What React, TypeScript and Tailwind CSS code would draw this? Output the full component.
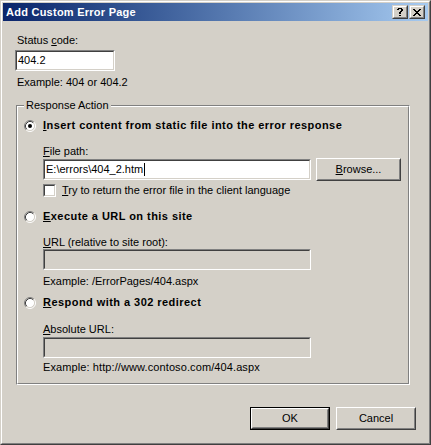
import clsx from 'clsx';
import type { ReactNode } from 'react';

function Sunken({ className, disabled, children }: { className?: string; disabled?: boolean; children?: ReactNode }) {
  return (
    <div className={clsx('border border-t-[#808080] border-l-[#808080] border-r-white border-b-white', className)}>
      <div
        className={clsx(
          'flex h-full items-center border border-t-[#404040] border-l-[#404040] border-r-[#d4d0c8] border-b-[#d4d0c8] px-px',
          disabled ? 'bg-[#d4d0c8]' : 'bg-white',
        )}
      >
        {children}
      </div>
    </div>
  );
}

function Button({ className, isDefault, children }: { className?: string; isDefault?: boolean; children: ReactNode }) {
  return (
    <div className={clsx(isDefault && 'border border-black', className)}>
      <div className="h-full border border-t-white border-l-white border-r-[#404040] border-b-[#404040]">
        <div className="flex h-full items-center justify-center border border-t-[#d4d0c8] border-l-[#d4d0c8] border-r-[#808080] border-b-[#808080]">
          {children}
        </div>
      </div>
    </div>
  );
}

function TitleButton({ children }: { children: ReactNode }) {
  return (
    <div className="h-[14px] w-[16px] border border-t-[#d4d0c8] border-l-[#d4d0c8] border-r-[#404040] border-b-[#404040] bg-[#d4d0c8]">
      <div className="flex h-full items-center justify-center border border-t-white border-l-white border-r-[#808080] border-b-[#808080]">
        {children}
      </div>
    </div>
  );
}

function Radio({ checked }: { checked?: boolean }) {
  return (
    <svg width="12" height="12" viewBox="0 0 12 12" className="shrink-0">
      <circle cx="6" cy="6" r="4.5" fill="#fff" />
      <path d="M2.11 9.89A5.5 5.5 0 0 1 9.89 2.11" stroke="#808080" fill="none" />
      <path d="M9.89 2.11A5.5 5.5 0 0 1 2.11 9.89" stroke="#fff" fill="none" />
      <path d="M2.82 9.18A4.5 4.5 0 0 1 9.18 2.82" stroke="#404040" fill="none" />
      <path d="M9.18 2.82A4.5 4.5 0 0 1 2.82 9.18" stroke="#d4d0c8" fill="none" />
      {checked && <circle cx="6" cy="6" r="2" fill="#000" />}
    </svg>
  );
}

// pixel glyphs for the caption buttons
const closePx = [
  [0, 0], [1, 0], [6, 0], [7, 0],
  [1, 1], [2, 1], [5, 1], [6, 1],
  [2, 2], [3, 2], [4, 2], [5, 2],
  [3, 3], [4, 3],
  [2, 4], [3, 4], [4, 4], [5, 4],
  [1, 5], [2, 5], [5, 5], [6, 5],
  [0, 6], [1, 6], [6, 6], [7, 6],
];
const helpPx = [
  [1, 0], [2, 0], [3, 0], [4, 0],
  [0, 1], [1, 1], [4, 1], [5, 1],
  [4, 2], [5, 2],
  [3, 3], [4, 3],
  [2, 4], [3, 4],
  [2, 5], [3, 5],
  [2, 7], [3, 7],
];

function PixelGlyph({ px, w, h }: { px: number[][]; w: number; h: number }) {
  return (
    <svg width={w} height={h} viewBox={`0 0 ${w} ${h}`} shapeRendering="crispEdges">
      {px.map(([x, y]) => (
        <rect key={`${x}-${y}`} x={x} y={y} width="1" height="1" fill="#000" />
      ))}
    </svg>
  );
}

export default function App() {
  return (
    <div className="h-[445px] w-[431px] border border-t-[#d4d0c8] border-l-[#d4d0c8] border-r-[#404040] border-b-[#404040] bg-[#d4d0c8] font-['Liberation_Sans',Arial,sans-serif] text-[11px] leading-[13px] text-black">
      <div className="flex h-full flex-col border border-t-white border-l-white border-r-[#808080] border-b-[#808080] p-px">
        {/* title bar */}
        <div className="flex h-[18px] items-center justify-between bg-gradient-to-r from-[#0a246a] to-[#a6caf0] pl-[3px] pr-[3px]">
          <span className="font-bold tracking-[0.25px] text-white">Add Custom Error Page</span>
          <div className="flex gap-px">
            <TitleButton>
              <PixelGlyph px={helpPx} w={6} h={8} />
            </TitleButton>
            <TitleButton>
              <PixelGlyph px={closePx} w={8} h={7} />
            </TitleButton>
          </div>
        </div>

        <div className="flex flex-col px-[12px]">
          <div className="mt-[13px] ml-[2px]">
            Status <u>c</u>ode:
          </div>
          <Sunken className="mt-[3px] h-[21px] w-[100px]">404.2</Sunken>
          <div className="mt-[5px] ml-[2px]">Example: 404 or 404.2</div>

          {/* group box */}
          <div className="relative mt-[16px] ml-px h-[280px] w-[394px] border border-t-[#808080] border-l-[#808080] border-r-white border-b-white">
            <span className="absolute top-[-7px] left-[7px] bg-[#d4d0c8] px-[2px]">Response Action</span>
            <div className="h-full border border-t-white border-l-white border-r-[#808080] border-b-[#808080] pt-[12px] pl-[6px]">
              <div className="flex h-[13px] items-center gap-[7px]">
                <Radio checked />
                <span className="font-bold tracking-[0.45px]">
                  <u>I</u>nsert content from static file into the error response
                </span>
              </div>
              <div className="flex flex-col pl-[19px]">
                <div className="mt-[13px]">
                  <u>F</u>ile path:
                </div>
                <div className="flex h-[23px] items-center gap-[5px]">
                  <Sunken className="h-[21px] w-[268px]">
                    <span>{'E:\\errors\\404_2.htm'}</span>
                    <span className="ml-px h-[13px] w-px bg-black" />
                  </Sunken>
                  <Button className="h-[23px] w-[85px]">
                    <span>
                      <u>B</u>rowse...
                    </span>
                  </Button>
                </div>
                <div className="mt-[3px] flex h-[13px] items-center gap-[6px]">
                  <div className="h-[13px] w-[13px] border border-t-[#808080] border-l-[#808080] border-r-white border-b-white">
                    <div className="h-full border border-t-[#404040] border-l-[#404040] border-r-[#d4d0c8] border-b-[#d4d0c8] bg-white" />
                  </div>
                  <span>
                    <u>T</u>ry to return the error file in the client language
                  </span>
                </div>
              </div>

              <div className="mt-[13px] flex h-[13px] items-center gap-[7px]">
                <Radio />
                <span className="font-bold tracking-[0.45px]">
                  <u>E</u>xecute a URL on this site
                </span>
              </div>
              <div className="flex flex-col pl-[19px]">
                <div className="mt-[13px]">
                  <u>U</u>RL (relative to site root):
                </div>
                <Sunken disabled className="h-[21px] w-[268px]" />
                <div className="mt-[5px]">Example: /ErrorPages/404.aspx</div>
              </div>

              <div className="mt-[8px] flex h-[13px] items-center gap-[7px]">
                <Radio />
                <span className="font-bold tracking-[0.45px]">
                  <u>R</u>espond with a 302 redirect
                </span>
              </div>
              <div className="flex flex-col pl-[19px]">
                <div className="mt-[14px]">
                  <u>A</u>bsolute URL:
                </div>
                <Sunken disabled className="mt-px h-[21px] w-[268px]" />
                <div className="mt-[3px] tracking-[0.1px]">Example: http://www.contoso.com/404.aspx</div>
              </div>
            </div>
          </div>

          <div className="mt-[22px] flex justify-end gap-[6px]">
            <Button isDefault className="h-[23px] w-[80px]">
              OK
            </Button>
            <Button className="h-[23px] w-[80px]">Cancel</Button>
          </div>
        </div>
      </div>
    </div>
  );
}
